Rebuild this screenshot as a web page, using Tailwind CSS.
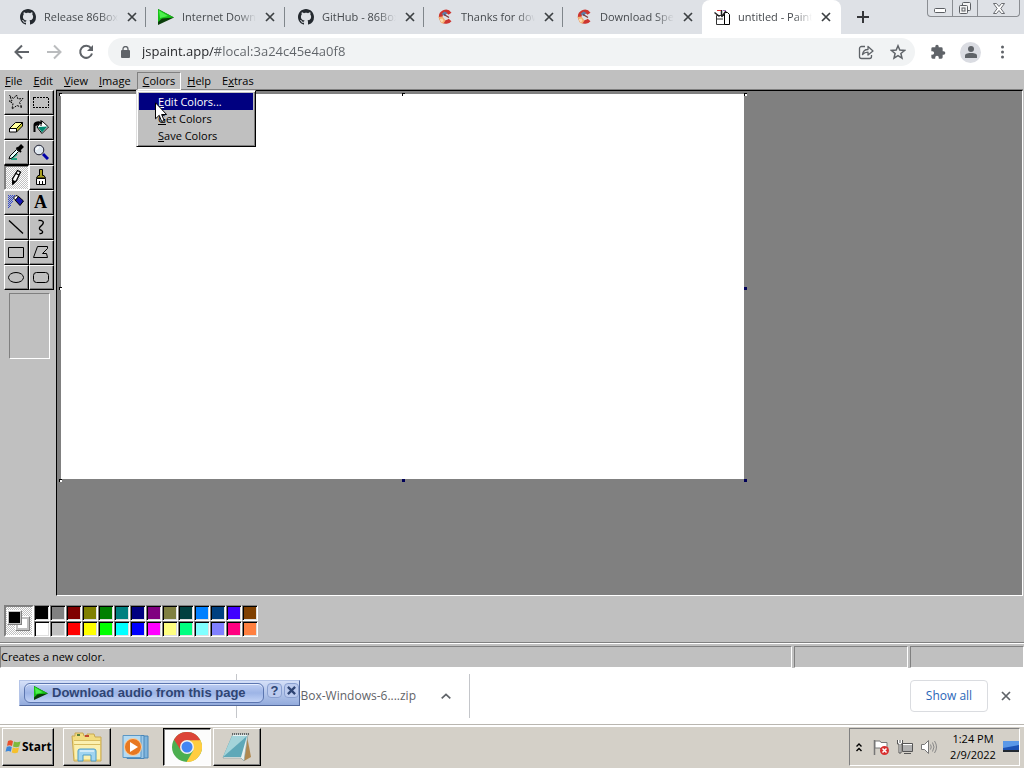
<!DOCTYPE html>
<html lang="en">
<head>
  <meta charset="UTF-8">
  <meta name="viewport" content="width=device-width, initial-scale=1.0">
  <title>untitled - Paint</title>
  <script src="https://cdn.jsdelivr.net/npm/@tailwindcss/browser@4"></script>
</head>
<body class="relative flex min-h-screen flex-col overflow-x-hidden bg-white font-['Open_Sans','Noto_Sans',sans-serif] text-[11px] text-black">

  <!-- Shared icons -->
  <svg class="hidden" aria-hidden="true">
    <symbol id="github" viewBox="0 0 16 16">
      <path fill="#24292f" d="M8 0C3.58 0 0 3.58 0 8c0 3.54 2.29 6.53 5.47 7.59.4.07.55-.17.55-.38 0-.19-.01-.82-.01-1.49-2.01.37-2.53-.49-2.69-.94-.09-.23-.48-.94-.82-1.13-.28-.15-.68-.52-.01-.53.63-.01 1.08.58 1.23.82.72 1.21 1.87.87 2.33.66.07-.52.28-.87.51-1.07-1.78-.2-3.64-.89-3.64-3.95 0-.87.31-1.59.82-2.15-.08-.2-.36-1.02.08-2.12 0 0 .67-.21 2.2.82.64-.18 1.32-.27 2-.27s1.36.09 2 .27c1.53-1.04 2.2-.82 2.2-.82.44 1.1.16 1.92.08 2.12.51.56.82 1.27.82 2.15 0 3.07-1.87 3.75-3.65 3.95.29.25.54.73.54 1.48 0 1.07-.01 1.93-.01 2.2 0 .21.15.46.55.38A8.01 8.01 0 0 0 16 8c0-4.42-3.58-8-8-8z"/>
    </symbol>
    <symbol id="ccleaner" viewBox="0 0 16 16">
      <path fill="none" stroke="#cc3530" stroke-width="3.600" d="M13 4.800C11.500 2.600 9 2 6.800 3 4.300 4.200 3.300 6.500 3.800 9c.6 2.800 3 4.300 5.700 3.900 1.500-.2 2.700-.8 3.600-1.900"/>
      <path fill="#5f7fa8" d="m4.500 5 3-2.500 3 1.500-3 3z"/>
      <path stroke="#7b3a3a" stroke-width="1.300" d="m7 5.500 5 3"/>
      <path fill="#f3b070" d="m1.500 8 4-.5 3 4-2 3-2.500-.5z"/>
      <path fill="#f8dcb4" d="m2.500 10 3-.5 1 2.500-2 1.500z"/>
    </symbol>
    <symbol id="cross" viewBox="0 0 10 10">
      <path stroke="currentColor" stroke-width="1.700" d="m1 1 8 8M9 1 1 9"/>
    </symbol>
    <symbol id="play" viewBox="0 0 16 16">
      <path fill="#0a3d0a" d="M0 0l16 8.500L0 16z"/>
      <path fill="#18c218" d="M0 0l16 8.500L4 9.500 0 13z"/>
      <path fill="#4df04d" d="M1 1.500 10 7 2 9z"/>
    </symbol>
  </svg>

  <!-- Tab strip -->
  <header class="flex h-[34px] items-start overflow-hidden bg-[#dee1e6] pl-[7px] text-[#45494d]">
    <div class="flex h-[34px] w-[139px] shrink-0 items-center pl-[13px]">
      <svg class="size-4"><use href="#github"/></svg>
      <span class="ml-2 w-[74px] overflow-hidden whitespace-nowrap [mask-image:linear-gradient(90deg,#000_75%,transparent)]">Release 86Box v3.1</span>
      <button class="ml-[9px] text-[#3c4043]" aria-label="Close tab"><svg class="size-[10px]"><use href="#cross"/></svg></button>
      <span class="ml-auto h-5 w-px bg-[#80868b]"></span>
    </div>
    <div class="flex h-[34px] w-[139px] shrink-0 items-center pl-3">
      <svg class="size-4"><use href="#play"/></svg>
      <span class="ml-2 w-[74px] overflow-hidden whitespace-nowrap [mask-image:linear-gradient(90deg,#000_75%,transparent)]">Internet Download</span>
      <button class="ml-[9px] text-[#3c4043]" aria-label="Close tab"><svg class="size-[10px]"><use href="#cross"/></svg></button>
      <span class="ml-auto h-5 w-px bg-[#80868b]"></span>
    </div>
    <div class="flex h-[34px] w-[139px] shrink-0 items-center pl-[13px]">
      <svg class="size-4"><use href="#github"/></svg>
      <span class="ml-2 w-[74px] overflow-hidden whitespace-nowrap [mask-image:linear-gradient(90deg,#000_75%,transparent)]">GitHub - 86Box</span>
      <button class="ml-[9px] text-[#3c4043]" aria-label="Close tab"><svg class="size-[10px]"><use href="#cross"/></svg></button>
      <span class="ml-auto h-5 w-px bg-[#80868b]"></span>
    </div>
    <div class="flex h-[34px] w-[139px] shrink-0 items-center pl-[13px]">
      <svg class="size-4"><use href="#ccleaner"/></svg>
      <span class="ml-2 w-[74px] overflow-hidden whitespace-nowrap [mask-image:linear-gradient(90deg,#000_75%,transparent)]">Thanks for downloading</span>
      <button class="ml-[9px] text-[#3c4043]" aria-label="Close tab"><svg class="size-[10px]"><use href="#cross"/></svg></button>
      <span class="ml-auto h-5 w-px bg-[#80868b]"></span>
    </div>
    <div class="flex h-[34px] w-[139px] shrink-0 items-center pl-[13px]">
      <svg class="size-4"><use href="#ccleaner"/></svg>
      <span class="ml-2 w-[74px] overflow-hidden whitespace-nowrap [mask-image:linear-gradient(90deg,#000_75%,transparent)]">Download Speccy</span>
      <button class="ml-[9px] text-[#3c4043]" aria-label="Close tab"><svg class="size-[10px]"><use href="#cross"/></svg></button>
    </div>
    <div class="flex h-[34px] w-[139px] shrink-0 items-center rounded-t-lg bg-white pl-3">
      <svg class="size-4" viewBox="0 0 16 16">
        <path fill="#fff" stroke="#333" d="M2.500 6.500h8v9h-8z"/>
        <path fill="#fff" stroke="#000" d="M10.500 3.500h3l2 2v10h-5z"/>
        <path fill="none" stroke="#222" stroke-width="1.500" d="m.5 3.500 5 4M12 2 7.500 8M7.500 1v6"/>
        <path fill="none" stroke="#d33" d="M3 1.500h4"/>
        <path fill="none" stroke="#a06fc0" d="M9 1.500h3"/>
        <path fill="#999" d="M3 9h6v2H3z"/>
      </svg>
      <span class="ml-2 w-[74px] overflow-hidden whitespace-nowrap [mask-image:linear-gradient(90deg,#000_75%,transparent)]">untitled - Paint</span>
      <button class="ml-[9px] text-[#3c4043]" aria-label="Close tab"><svg class="size-[10px]"><use href="#cross"/></svg></button>
    </div>
    <button class="mt-[11px] ml-4 text-[#35363a]" aria-label="New tab">
      <svg class="size-3" viewBox="0 0 12 12"><path stroke="currentColor" stroke-width="2" d="M6 0v12M0 6h12"/></svg>
    </button>
    <!-- Window buttons -->
    <div class="mr-1 ml-auto flex h-[17px] rounded-b-[4px] border border-t-0 border-[#8a8d92]">
      <button class="flex w-[25px] items-center justify-center border-r border-[#8a8d92] pt-1" aria-label="Minimize">
        <svg class="h-[5px] w-3" viewBox="0 0 12 5"><rect x=".5" y=".5" width="11" height="4" rx="1" fill="#fff" stroke="#5b5e63"/></svg>
      </button>
      <button class="flex w-[25px] items-center justify-center border-r border-[#8a8d92]" aria-label="Restore">
        <svg class="size-3" viewBox="0 0 12 12" fill="#f5f5f5" stroke="#5b5e63"><rect x="3.500" y=".5" width="8" height="8" rx="1"/><rect x=".5" y="3.500" width="8" height="8" rx="1"/><rect x="3" y="6" width="3" height="3"/></svg>
      </button>
      <button class="flex w-[41px] items-center justify-center" aria-label="Close">
        <svg class="h-[11px] w-3" viewBox="0 0 12 11"><path fill="#fff" stroke="#5b5e63" stroke-width=".9" d="M.5.5h3L6 3.500 8.500.5h3L7.800 5.500l3.700 5h-3L6 7.500l-2.500 3h-3l3.700-5z"/></svg>
      </button>
    </div>
  </header>

  <!-- Address bar -->
  <nav class="flex h-9 items-center bg-white pr-5 pl-[14px] text-[#5f6368]">
    <button aria-label="Back"><svg class="size-4" viewBox="0 0 16 16" fill="none" stroke="currentColor" stroke-width="2"><path d="M15 8H2M8 1.500 1.500 8 8 14.500"/></svg></button>
    <button class="ml-4 text-[#babcbe]" aria-label="Forward"><svg class="size-4" viewBox="0 0 16 16" fill="none" stroke="currentColor" stroke-width="2"><path d="M1 8h13M8 1.500 14.500 8 8 14.500"/></svg></button>
    <button class="ml-4" aria-label="Reload"><svg class="size-4" viewBox="0 0 16 16"><path fill="none" stroke="currentColor" stroke-width="2" d="M13 4.200A6 6 0 1 0 14 9.500"/><path fill="currentColor" d="M15 1v6H9z"/></svg></button>
    <div class="ml-[14px] flex h-7 flex-1 items-center rounded-full bg-[#f1f3f4] pr-[9px] pl-[13px]">
      <svg class="h-3 w-[9px]" viewBox="0 0 9 12"><rect y="4" width="9" height="8" rx="1" fill="currentColor"/><path fill="none" stroke="currentColor" stroke-width="1.300" d="M2 5V3a2.500 2.500 0 0 1 5 0v2"/></svg>
      <input class="ml-3 flex-1 bg-[linear-gradient(90deg,#202124_73px,#5f6368_73px)] bg-clip-text text-[13px] text-transparent outline-none" type="text" aria-label="Address" value="jspaint.app/#local:3a24c45e4a0f8">
      <button aria-label="Share"><svg class="size-4" viewBox="0 0 16 16" fill="none" stroke="currentColor" stroke-width="1.300"><path d="M7 2.500H3.500a2 2 0 0 0-2 2v8a2 2 0 0 0 2 2h8a2 2 0 0 0 2-2V11"/><path stroke-linejoin="round" d="M4.500 10.500C5 7 7 5.500 10 5.500v-3L15 7l-5 4V8.200c-2.500 0-4 .6-5.500 2.300z"/></svg></button>
      <button class="ml-4" aria-label="Bookmark"><svg class="size-4" viewBox="0 0 16 16" fill="none" stroke="currentColor" stroke-width="1.500"><path d="m8 1.800 1.800 4.300 4.700.4-3.600 3 1.100 4.600L8 11.700l-4 2.400 1.100-4.600-3.600-3 4.700-.4z"/></svg></button>
    </div>
    <button class="ml-[15px]" aria-label="Extensions"><svg class="size-4" viewBox="0 0 24 24"><path fill="currentColor" d="M20.500 11H19V7a2 2 0 0 0-2-2h-4V3.500a2.500 2.500 0 0 0-5 0V5H4a2 2 0 0 0-2 2v3.800h1.500a2.700 2.700 0 0 1 0 5.400H2V20a2 2 0 0 0 2 2h3.800v-1.500a2.700 2.700 0 0 1 5.400 0V22H17a2 2 0 0 0 2-2v-4h1.500a2.500 2.500 0 0 0 0-5z"/></svg></button>
    <button class="ml-[14px] flex size-[21px] items-center justify-center rounded-full bg-[#dadce2]" aria-label="Profile"><svg class="size-3" viewBox="0 0 12 12" fill="currentColor"><circle cx="6" cy="3" r="3"/><path d="M0 12V9.500C0 7.500 4 7 6 7s6 .5 6 2.500V12z"/></svg></button>
    <button class="ml-5" aria-label="Menu"><svg class="h-[14px] w-[3px]" viewBox="0 0 3 14" fill="currentColor"><circle cx="1.500" cy="2" r="1.500"/><circle cx="1.500" cy="7" r="1.500"/><circle cx="1.500" cy="12" r="1.500"/></svg></button>
  </nav>

  <!-- Paint -->
  <main class="flex flex-1 flex-col bg-[#c0c0c0]">
    <div class="relative flex h-5 items-center gap-px pt-[2px]">
      <button class="px-[5px]"><u>F</u>ile</button>
      <button class="px-[5px]"><u>E</u>dit</button>
      <button class="px-[5px]"><u>V</u>iew</button>
      <button class="px-[5px]"><u>I</u>mage</button>
      <button class="h-[18px] border border-[#808080] border-r-white border-b-white px-[5px] leading-4"><u>C</u>olors</button>
      <button class="px-[5px]"><u>H</u>elp</button>
      <button class="px-[5px]">E<u>x</u>tras</button>

      <div class="absolute top-5 left-[136px] z-10 flex w-[120px] flex-col border border-[#dfdfdf] border-r-black border-b-black bg-[#c0c0c0] p-[2px] shadow-[inset_1px_1px_#fff,inset_-1px_-1px_#808080]">
        <button class="h-[17px] bg-[#000080] pt-px pl-[19px] text-left text-white"><u>E</u>dit Colors...</button>
        <button class="h-[17px] pt-px pl-[19px] text-left"><u>G</u>et Colors</button>
        <button class="h-[17px] pt-px pl-[19px] text-left"><u>S</u>ave Colors</button>
      </div>
      <svg class="absolute top-[32px] left-[155px] z-20 h-[21px] w-3" viewBox="0 0 12 21"><path fill="#fff" stroke="#000" d="M.5.8v16l3.700-3.500 2.500 6.200 2.500-1-2.600-6h5z"/></svg>
    </div>

    <div class="flex flex-1">
      <!-- Toolbox -->
      <div class="w-14 pl-1">
        <div class="grid w-[50px] grid-cols-2 [&>button]:flex [&>button]:h-[25px] [&>button]:items-center [&>button]:justify-center [&>button]:border [&>button]:border-white [&>button]:border-r-black [&>button]:border-b-black [&>button]:pr-[2px] [&>button]:pb-[2px] [&>button]:shadow-[inset_-1px_-1px_#808080] [&_svg]:size-4">
          <button aria-label="Free-Form Select"><svg viewBox="0 0 16 16" fill="none" stroke="#000" stroke-dasharray="2 1"><path d="m1.500 1.500 4 3 3-3.500 1.500 4 5-.5-3.500 4 2.500 5-5-2-5 3.500 1-5.500-4-2.500h3z"/></svg></button>
          <button aria-label="Select"><svg viewBox="0 0 16 16" fill="none" stroke="#000" stroke-dasharray="2 1" shape-rendering="crispEdges"><path d="M.5 3.500h15v10H.5z"/></svg></button>
          <button aria-label="Eraser"><svg viewBox="0 0 16 16" stroke="#000" stroke-linejoin="round"><path fill="#ffff9a" d="m1.500 9.500 6-6h7l-6 6z"/><path fill="#fff" d="M1.500 9.500h7v3.500h-7z"/><path fill="#c8c832" d="m8.500 9.500 6-6V7l-6 6z"/></svg></button>
          <button aria-label="Fill"><svg viewBox="0 0 16 16"><path fill="#fff" stroke="#000" d="m9 2 6.500 6L9 14.500 4 8z"/><path fill="#008870" d="m5 8 9.500-.5L9 13.500z"/><path fill="none" stroke="#000" stroke-width="2" d="M9 4.500C6 2 1.500 3.500 1.500 6v7M2 6l4-1"/><path stroke="#000" d="M8 1v6"/></svg></button>
          <button aria-label="Pick Color"><svg viewBox="0 0 16 16"><path stroke="#20a080" stroke-width="2" d="m3 15 6-5M3 15h6"/><path stroke="#000" stroke-width="4" d="m10.500 5.500 4-4"/><path stroke="#000" stroke-width="2" d="m8.500 3.500 4.500 4.500"/><path fill="#e8ffff" stroke="#000" d="m8.500 5.500-6.500 6.500-1 3 3-1 6.500-6.500z"/></svg></button>
          <button aria-label="Magnifier"><svg viewBox="0 0 16 16"><path stroke="#0000a8" stroke-width="3" d="m10 10 5 5"/><circle cx="6" cy="6" r="4.800" fill="#dfe8f0" stroke="#223"/><path fill="none" stroke="#fff" stroke-width="1.500" d="M3.500 6C3.500 4.500 5 3.500 6 3.500"/></svg></button>
          <button class="border-[#808080]! border-t-black! border-r-white! border-b-white! bg-[repeating-conic-gradient(#fff_0_25%,#c0c0c0_0_50%)] bg-[length:2px_2px] shadow-[inset_1px_1px_#808080]!" aria-label="Pencil"><svg viewBox="0 0 16 16"><path fill="#fff" stroke="#000" stroke-width="1.300" d="m9.500 1.500 3 1.500L8.500 11.500 5 15l-.5-5z"/><path stroke="#000" stroke-width="1.300" d="m8 4.500 3 1.500"/><path fill="#000" d="M4 10.500V16l4-3.500z"/></svg></button>
          <button aria-label="Brush"><svg viewBox="0 0 16 16" stroke="#000"><path fill="#a8a020" d="M6.500.5h3v6h1.500l1.500 2.500h-9L5 6.500h1.500z"/><path fill="#fff" d="M3.500 9.500h9v6h-9z"/><path d="M6.500 12v3M9.500 12v3"/></svg></button>
          <button aria-label="Airbrush"><svg viewBox="0 0 16 16"><g stroke="#3048d0" stroke-dasharray="1 1" shape-rendering="crispEdges"><path d="M.5 1v14M2.500 1v11M4.500 1v8M6.500 1v3"/><path stroke-dashoffset="1" d="M1.500 1v13M3.500 1v9M5.500 1v4"/></g><path fill="#1818b0" stroke="#000" d="m7 6 3.500-3.500L15.500 7 12 11.500z"/><path fill="#fff" stroke="#000" d="M5.500 4 8 1.500l2.500 1L7.500 6z"/></svg></button>
          <button class="font-['Liberation_Serif',serif] text-lg leading-none font-bold" aria-label="Text">A</button>
          <button aria-label="Line"><svg viewBox="0 0 16 16" stroke="#000" stroke-width="1.300"><path d="m1 1.500 14 13"/></svg></button>
          <button aria-label="Curve"><svg viewBox="0 0 16 16" fill="none" stroke="#000" stroke-width="1.300"><path d="M5.500 1.500c4-.5 6 1.500 4 4L7 8c-1.500 2 0 2.500 1.500 3.500 2.500 1.500.5 3.500-2 3"/></svg></button>
          <button aria-label="Rectangle"><svg viewBox="0 0 16 16" fill="none" stroke="#000"><path d="M.5 3.500h15v10H.5z"/></svg></button>
          <button aria-label="Polygon"><svg viewBox="0 0 16 16" fill="none" stroke="#000"><path d="M4.500 2.500h10v2l-5 5h4l1 4H.500z"/></svg></button>
          <button aria-label="Ellipse"><svg viewBox="0 0 16 16" fill="none" stroke="#000"><ellipse cx="8" cy="8.500" rx="7.500" ry="5"/></svg></button>
          <button aria-label="Rounded Rectangle"><svg viewBox="0 0 16 16" fill="none" stroke="#000"><rect x=".5" y="3.500" width="15" height="10" rx="3"/></svg></button>
        </div>
        <div class="mt-[3px] ml-[5px] h-[66px] w-[41px] border border-[#808080] border-r-white border-b-white"></div>
      </div>
      <!-- Canvas -->
      <div class="mr-px flex-1 border border-black border-r-white border-b-white bg-[#808080] pt-[3px] pl-1 shadow-[0_-1px_#808080]">
        <div class="relative h-[385px] w-[683px] bg-white [&>i]:absolute [&>i]:size-[3px]">
          <i class="-top-px -left-[2px] border-t border-l border-black bg-white"></i>
          <i class="-top-px left-[341px] border-t border-l border-black bg-white"></i>
          <i class="-top-px -right-[3px] border-t border-l border-black bg-white"></i>
          <i class="top-[193px] -left-[2px] border-t border-l border-black bg-white"></i>
          <i class="top-[193px] -right-[3px] bg-[#000058]"></i>
          <i class="-bottom-[3px] -left-[2px] border-t border-l border-black bg-white"></i>
          <i class="-bottom-[3px] left-[341px] bg-[#000058]"></i>
          <i class="-right-[3px] -bottom-[3px] bg-[#000058]"></i>
        </div>
      </div>
    </div>

    <!-- Color box -->
    <div class="flex h-[47px] border-b border-[#808080] pt-[9px] pl-1">
      <div class="relative h-8 w-[30px] border-2 border-[#808080] border-r-white border-b-white bg-[repeating-conic-gradient(#fff_0_25%,#c0c0c0_0_50%)] bg-[length:2px_2px]">
        <span class="absolute top-[9px] left-[9px] size-[15px] border border-white border-r-[#808080] border-b-[#808080] bg-[#c0c0c0] p-[2px]"><span class="block size-full bg-white"></span></span>
        <span class="absolute top-[3px] left-px size-[15px] border border-white border-r-[#808080] border-b-[#808080] bg-[#c0c0c0] p-px"><span class="block size-full bg-black"></span></span>
      </div>
      <div class="grid h-8 grid-cols-[repeat(14,16px)] [&>button]:h-4 [&>button]:border [&>button]:border-[#808080] [&>button]:border-r-white [&>button]:border-b-white [&>button]:shadow-[inset_1px_1px_#000,inset_-1px_-1px_#dfdfdf]">
        <button class="bg-[#000000]" aria-label="Black"></button>
        <button class="bg-[#808080]" aria-label="Dark gray"></button>
        <button class="bg-[#800000]" aria-label="Dark red"></button>
        <button class="bg-[#808000]" aria-label="Pea green"></button>
        <button class="bg-[#008000]" aria-label="Dark green"></button>
        <button class="bg-[#008080]" aria-label="Slate"></button>
        <button class="bg-[#000080]" aria-label="Dark blue"></button>
        <button class="bg-[#800080]" aria-label="Lavender"></button>
        <button class="bg-[#808040]" aria-label="Olive"></button>
        <button class="bg-[#004040]" aria-label="Dark teal"></button>
        <button class="bg-[#0080ff]" aria-label="Azure"></button>
        <button class="bg-[#004080]" aria-label="Navy"></button>
        <button class="bg-[#4000ff]" aria-label="Violet"></button>
        <button class="bg-[#804000]" aria-label="Brown"></button>
        <button class="bg-[#ffffff]" aria-label="White"></button>
        <button class="bg-[#c0c0c0]" aria-label="Light gray"></button>
        <button class="bg-[#ff0000]" aria-label="Red"></button>
        <button class="bg-[#ffff00]" aria-label="Yellow"></button>
        <button class="bg-[#00ff00]" aria-label="Green"></button>
        <button class="bg-[#00ffff]" aria-label="Cyan"></button>
        <button class="bg-[#0000ff]" aria-label="Blue"></button>
        <button class="bg-[#ff00ff]" aria-label="Magenta"></button>
        <button class="bg-[#ffff80]" aria-label="Light yellow"></button>
        <button class="bg-[#00ff80]" aria-label="Mint"></button>
        <button class="bg-[#80ffff]" aria-label="Light cyan"></button>
        <button class="bg-[#8080ff]" aria-label="Periwinkle"></button>
        <button class="bg-[#ff0080]" aria-label="Rose"></button>
        <button class="bg-[#ff8040]" aria-label="Orange"></button>
      </div>
    </div>

    <!-- Status bar -->
    <div class="flex h-[25px] gap-[2px] border-t border-white pt-[2px] [&>div]:border [&>div]:border-[#808080] [&>div]:border-r-white [&>div]:border-b-white">
      <div class="flex-1 leading-5">Creates a new color.</div>
      <div class="w-[114px]"></div>
      <div class="w-[114px]"></div>
    </div>
  </main>

  <!-- Downloads -->
  <section class="relative flex h-14 items-center bg-white text-[#5f6368]">
    <div class="h-[44px] w-[237px] border-r border-[#c4c6ca]"></div>
    <div class="flex h-[44px] w-[233px] items-center border-r border-[#c4c6ca] pr-[18px]">
      <span class="flex-1 text-right text-xs">86Box-Windows-6....zip</span>
      <button class="ml-[25px]" aria-label="Download options"><svg class="h-[6px] w-[10px]" viewBox="0 0 10 6"><path fill="none" stroke="currentColor" stroke-width="1.700" d="m.7 5.300 4.300-4 4.300 4"/></svg></button>
    </div>
    <button class="ml-auto h-8 w-[78px] rounded-[4px] border border-[#dadce0] text-xs text-[#2a66b8]">Show all</button>
    <button class="mr-[13px] ml-[13px]" aria-label="Close downloads"><svg class="size-[10px]"><use href="#cross"/></svg></button>

    <div class="absolute top-[12px] left-[19px] flex h-[26px] w-[281px] items-start gap-[2px] border border-[#b4c4e8] border-r-[#51689c] border-b-[#51689c] bg-linear-to-b from-[#d5e0f8] to-[#93abdc] pt-[2px] pl-1 font-['Liberation_Sans',sans-serif] text-[#2f4574]">
      <button class="flex h-5 w-[241px] items-center rounded-[6px] border border-[#5c76b0] bg-linear-to-b from-[#bccdf2] via-[#9db4e6] to-[#c2d3f6] pl-[9px] text-[13px] font-bold whitespace-nowrap shadow-[inset_0_1px_#e6eeff]">
        <svg class="mr-1 h-[14px] w-[14px]"><use href="#play"/></svg>Download audio from this page
      </button>
      <button class="ml-px size-[15px] rounded-[4px] border border-[#8aa0d0] bg-[#bccbee] text-[13px] leading-[13px] font-bold" aria-label="Help">?</button>
      <button class="flex size-[15px] items-center justify-center rounded-[4px] border border-[#8aa0d0] bg-[#bccbee]" aria-label="Close"><svg class="size-[9px]" viewBox="0 0 10 10"><path stroke="currentColor" stroke-width="2.500" d="m1 1 8 8M9 1 1 9"/></svg></button>
    </div>
  </section>

  <!-- Taskbar -->
  <footer class="flex h-11 items-center border-t border-[#b9b6b0] bg-[#d4d0c8] pt-px pr-1 pl-[2px] shadow-[inset_0_2px_#fff]">
    <button class="flex h-[38px] w-[52px] items-center border border-white border-r-black border-b-black pl-[2px] font-['Open_Sans','Noto_Sans',sans-serif] text-xs font-bold shadow-[inset_-1px_-1px_#808080]">
      <svg class="mr-px size-4 shrink-0" viewBox="0 0 16 16"><path fill="#e8502c" d="M3 2c2-1 3.500-.8 5 .2L7 7C5.500 6 4 6 2 6.800z"/><path fill="#7dba3c" d="M9 2.600c2 1 4 1 6.500 0L14.200 7.500C12 8.500 10 8.300 8 7.400z"/><path fill="#3c86d8" d="M1.800 7.800c2-1 3.500-.8 5 .2l-1 4.800c-1.500-1-3-1-5.300 0z"/><path fill="#f5c02c" d="M7.800 8.500c2 1 4 1 6.200 0l-1.200 5c-2.200 1-4 .8-6 0z"/></svg>Start
    </button>
    <button class="ml-[9px] flex h-[38px] w-12 items-center justify-center border border-white border-r-black border-b-black shadow-[inset_-1px_-1px_#808080]" aria-label="Explorer">
      <svg class="size-8" viewBox="0 0 32 32"><path fill="#f2dc80" stroke="#c8a850" d="M1 5h3V2h8l1 3h3V3h7l1 3h6v24H3z"/><path fill="#fbf0b0" d="M3 9h26v19H4z"/><path stroke="#d8bc60" d="M3 9.500h27M3 13.500h27"/><path fill="#58803c" d="M6 3h3v2H6z"/><path fill="#c04a30" d="M14 4h4v2h-4z"/><path fill="#a0d4f0" stroke="#4b9cc8" d="M7 30V20q0-2 2-2h14q2 0 2 2v10h-5v-6h-8v6z"/><path stroke="#fff" d="M9 20h14"/></svg>
    </button>
    <button class="ml-[11px] flex h-[38px] w-7 items-center justify-center" aria-label="Media Player">
      <svg class="size-7" viewBox="0 0 28 28"><path fill="#7fb4dc" stroke="#4a86b8" d="M9 3h17v22H9z"/><path fill="#9cc8e8" stroke="#4a86b8" d="M5 2.500h17v23H5z"/><path fill="#b4daf2" stroke="#5a96c4" d="M1 2.500h18v22H1z"/><circle cx="11" cy="14" r="8.500" fill="#e87820" stroke="#fbd0a0"/><path fill="#fff" d="m8 9 8 5-8 5z"/></svg>
    </button>
    <button class="ml-[13px] flex h-[38px] w-12 items-center justify-center border border-black border-r-white border-b-white bg-[#fcfcfc] shadow-[inset_1px_1px_#808080]" aria-label="Chrome">
      <svg class="size-[30px]" viewBox="0 0 30 30"><circle cx="15" cy="15" r="15" fill="#4caf50"/><path fill="#ffcd40" d="M28 7.500A15 15 0 0 1 14.500 30L21.300 18.500 15 8.500z"/><path fill="#dc4437" d="M2 7.500A15 15 0 0 1 28 7.500l-.4.700H15l-6.200 10z"/><circle cx="15" cy="15" r="7" fill="#f1f1f1"/><circle cx="15" cy="15" r="5.500" fill="#4285f4"/></svg>
    </button>
    <button class="ml-[2px] flex h-[38px] w-12 items-center justify-center border border-white border-r-black border-b-black shadow-[inset_-1px_-1px_#808080]" aria-label="Notepad">
      <svg class="size-8" viewBox="0 0 32 32"><path fill="#b08850" d="m26 5 4 21-7 4z"/><path fill="#e8f0f0" stroke="#8ca0a0" stroke-width=".7" d="M12 3h15l-4 27-3-3H2z"/><path fill="#5fa8b8" d="M11 5h15l-6 21H2z"/><path fill="#a4d4da" d="M11 5h15L2 26z"/><path stroke="#666" stroke-width="2" stroke-dasharray="1 1" d="M11 3h17"/></svg>
    </button>

    <div class="ml-auto flex h-[38px] w-[171px] items-center border border-[#808080] border-r-white border-b-white pl-[6px]">
      <button aria-label="Show hidden icons"><svg class="h-[9px] w-[6px]" viewBox="0 0 6 9" fill="none" stroke="#000" stroke-width="1.400"><path d="m.5 3.500 2.500-2.500 2.500 2.500M.5 8 3 5.500 5.500 8"/></svg></button>
      <svg class="ml-[11px] size-4" viewBox="0 0 16 16"><path stroke="#777" stroke-width="1.500" d="M1.500 1v15"/><path fill="#fff" stroke="#777" d="M2 2h5l1 1.500h6V10H8L7 9H2z"/><circle cx="11.500" cy="11.500" r="4.500" fill="#d83030"/><path stroke="#fff" stroke-width="1.500" d="m9.500 9.500 4 4m0-4-4 4"/></svg>
      <svg class="ml-2 size-4" viewBox="0 0 16 16"><path fill="#b0b0b0" stroke="#555" d="M5.500 4.500h10v8h-10z"/><path stroke="#fff" d="M6 5.500h9"/><path stroke="#555" d="M7 14.500h7"/><path fill="#fff" stroke="#555" d="M.5 1v4h1.500v9h2V5h1.500V1"/><path stroke="#555" d="M3 1v3"/></svg>
      <svg class="ml-2 size-4" viewBox="0 0 16 16"><path fill="#fff" stroke="#777" d="M.5 5.500h3l4-4v13l-4-4h-3z"/><path fill="none" stroke="#888" d="M9.500 5.500q1.500 2.500 0 5M11.500 3.500q3 4.500 0 9M13.500 2q4 6 0 12"/></svg>
      <div class="ml-3 w-12 text-center leading-4 whitespace-nowrap"><p>1:24 PM</p><p>2/9/2022</p></div>
      <svg class="ml-[6px] h-3 w-4" viewBox="0 0 16 12"><path fill="#1c52b4" d="M0 0h16v10H0z"/><path fill="#5a98e8" d="M0 0h16v4L0 7z"/><path fill="#202830" d="M0 9h16v2H0z"/></svg>
    </div>
  </footer>

</body>
</html>
